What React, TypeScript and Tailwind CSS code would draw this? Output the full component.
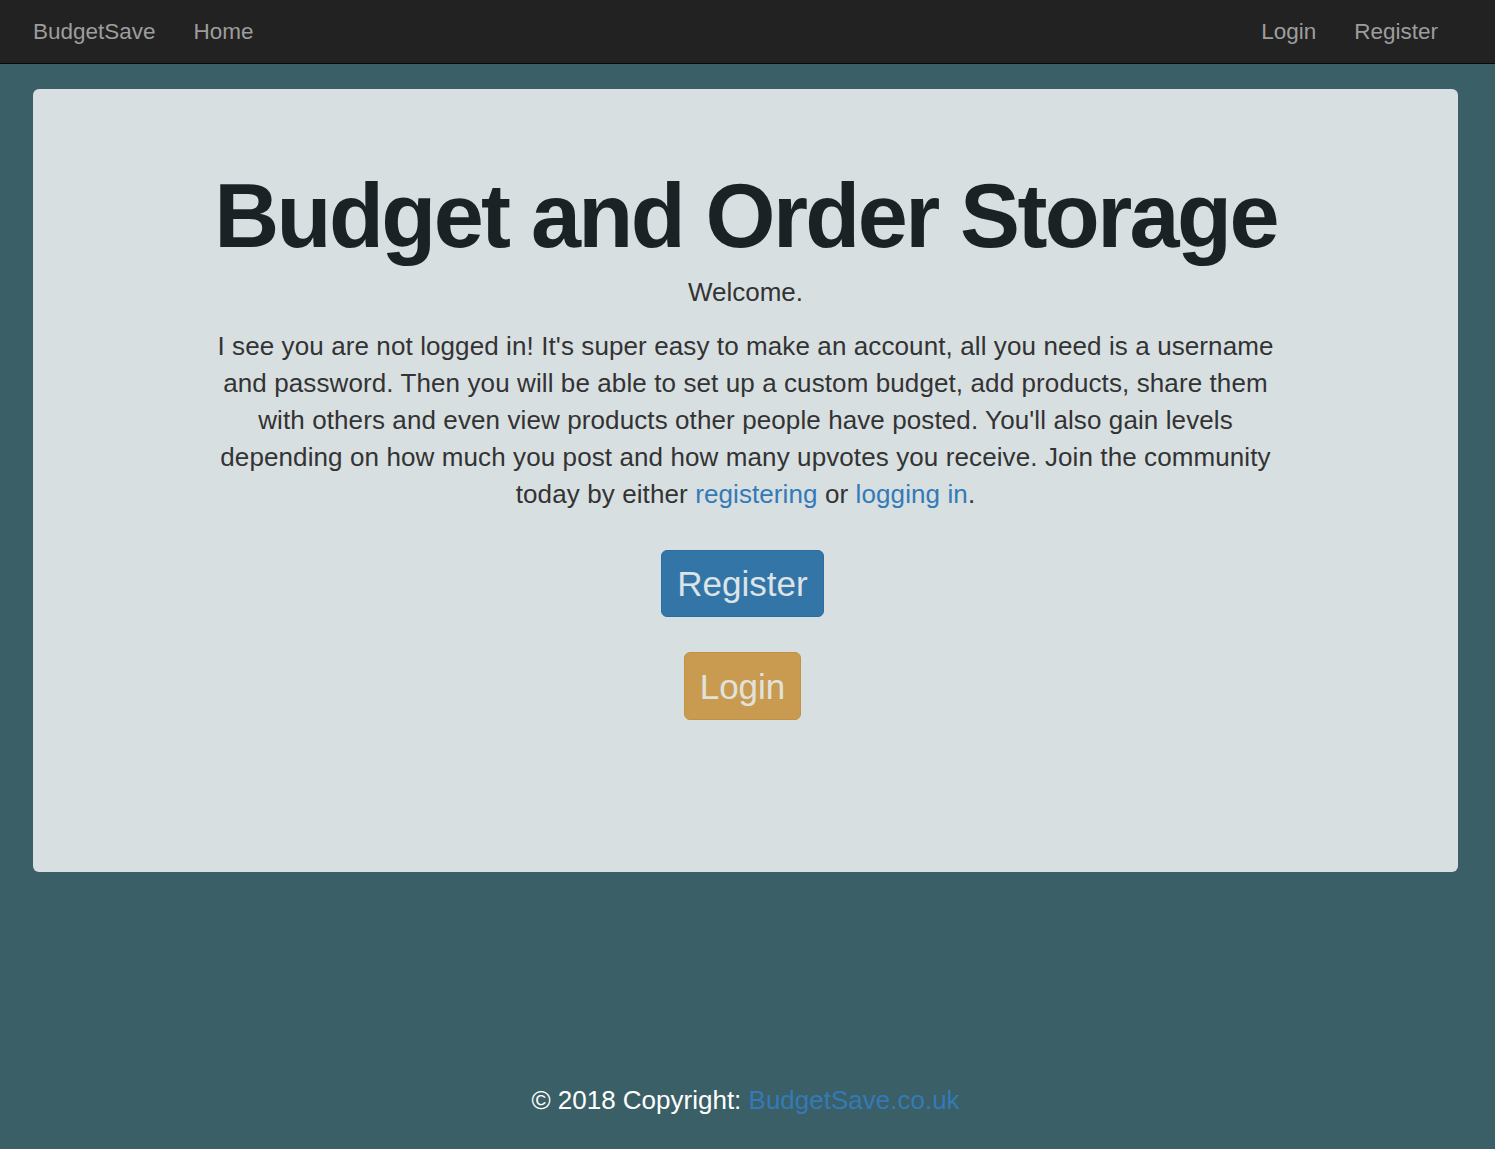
export default function App() {
  return (
    <div className="min-h-screen flex flex-col bg-[#3a5f66] font-['Liberation_Sans',Arial,sans-serif] text-[#333]">
      <nav className="h-[64px] flex items-center justify-between bg-[#222] border-b border-[#080808] pl-[33px] pr-[57px] text-[22.5px] text-[#9d9d9d]">
        <div className="flex items-center gap-[38px]">
          <a href="#">BudgetSave</a>
          <a href="#">Home</a>
        </div>
        <div className="flex items-center gap-[38px]">
          <a href="#">Login</a>
          <a href="#">Register</a>
        </div>
      </nav>

      <main className="pl-[33px] pr-[37px] pt-[25px]">
        <div className="bg-[#d7dfe1] rounded-[6px] pt-[82px] pb-[152px] flex flex-col items-center text-center">
          <h1 className="text-[90px] leading-[90px] font-bold tracking-[-2.6px] text-[#1a2225]">
            Budget and Order Storage
          </h1>
          <p className="mt-[13px] text-[26px] leading-[37px]">Welcome.</p>
          <p className="mt-[17px] max-w-[1080px] text-[26px] leading-[37px] tracking-[0.1px]">
            I see you are not logged in! It's super easy to make an account, all you need is a username and password.
            Then you will be able to set up a custom budget, add products, share them with others and even view
            products other people have posted. You'll also gain levels depending on how much you post and how many
            upvotes you receive. Join the community today by either{" "}
            <a href="#" className="text-[#337ab7]">registering</a> or{" "}
            <a href="#" className="text-[#337ab7]">logging in</a>.
          </p>
          <button className="mt-[37px] mr-[6px] h-[67px] px-[15px] rounded-[6px] bg-[#3475a8] border border-[#2e6da4] text-[35px] leading-none text-[#dce4e7]">
            Register
          </button>
          <button className="mt-[35px] mr-[6px] h-[68px] px-[15px] rounded-[6px] bg-[#c99b50] border border-[#c4923f] text-[35px] leading-none text-[#e0e2de]">
            Login
          </button>
        </div>
      </main>

      <footer className="mt-auto pb-[31px] pr-[4px] text-center text-[26px] leading-[36px] text-white">
        © 2018 Copyright: <a href="#" className="text-[#337ab7]">BudgetSave.co.uk</a>
      </footer>
    </div>
  );
}
